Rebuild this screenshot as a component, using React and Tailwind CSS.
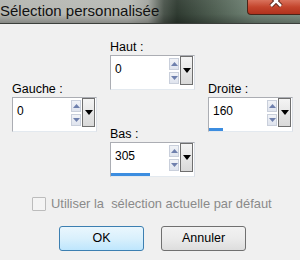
import React from "react";

function Spinner() {
  return (
    <div className="w-[10px] flex flex-col gap-[2px] pt-[2px]">
      {/* up */}
      <div className="h-[12px] border border-[#c9cfdb] bg-[linear-gradient(#f1f3f7,#dfe4ee)] flex items-center justify-center">
        <svg width="7" height="4" viewBox="0 0 7 4">
          <path d="M0 4 L3.5 0 L7 4 Z" fill="#6f80ad" />
        </svg>
      </div>
      {/* down */}
      <div className="h-[12px] border border-[#c9cfdb] bg-[linear-gradient(#f1f3f7,#dfe4ee)] flex items-center justify-center">
        <svg width="7" height="4" viewBox="0 0 7 4">
          <path d="M0 0 L7 0 L3.5 4 Z" fill="#6f80ad" />
        </svg>
      </div>
    </div>
  );
}

function NumField({ label, value, bar = 0 }) {
  return (
    <div className="flex flex-col">
      <div className="h-[15px] leading-[15px] text-[12.5px] text-black">{label}</div>
      <div className="w-[85px] h-[35px] border border-[#abadb3] border-r-[#dbdfe6] border-b-[#e3e9ef] bg-white flex flex-col">
        <div className="flex h-[29px]">
          <div className="flex-1 pl-[4px] pt-[6px] text-[12px] leading-[14px] text-black">{value}</div>
          <Spinner />
          <div className="w-[13px] ml-[1px] mr-[1px] border border-[#6f6f6f] bg-[linear-gradient(#f4f4f4,#d9d9d9)] flex justify-center pt-[11px]">
            <svg width="8" height="5" viewBox="0 0 8 5">
              <path d="M0 0 L8 0 L4 5 Z" fill="#000" />
            </svg>
          </div>
        </div>
        <div className="h-[4px] flex items-end">
          <div className="h-[3px] bg-[#3c8de0]" style={{ width: bar }} />
        </div>
      </div>
    </div>
  );
}

export default function App() {
  return (
    <div className="w-[300px] h-[260px] overflow-hidden bg-[#f0f0f0] font-['Liberation_Sans',Arial,sans-serif]">
      {/* Title bar */}
      <div className="relative h-[24px] border-b border-[#3b3f3b] bg-[linear-gradient(90deg,#b4b6b1_0px,#b9bbb6_128px,#a2a59f_148px,#4a544b_164px,#2f3b31_177px,#4f5f52_215px,#738678_255px,#7f9184_300px)]">
        <div className="absolute inset-0 bg-[linear-gradient(rgba(255,255,255,0.05),rgba(255,255,255,0)_60%,rgba(0,0,0,0.25))]" />
        <div className="relative pt-[2px] text-[15px] leading-[18px] text-[#111] whitespace-nowrap">
          Sélection personnalisée
        </div>
        {/* Close button */}
        <div className="absolute right-0 top-0 w-[53px] h-[15px] rounded-bl-[4px] border border-t-0 border-r-0 border-[#4a2418] bg-[linear-gradient(#d9725c,#c4452d_50%,#b0321d)] overflow-hidden flex justify-center">
          <svg width="16" height="16" viewBox="0 0 16 16" className="-mt-[7px] ml-[4px]">
            <path d="M3 3 L13 13 M13 3 L3 13" stroke="#5a2418" strokeWidth="4.5" />
            <path d="M3 3 L13 13 M13 3 L3 13" stroke="#fff" strokeWidth="2.5" />
          </svg>
        </div>
      </div>

      {/* Fields */}
      <div className="flex gap-[13px] pl-[12px]">
        <div className="pt-[58px]">
          <NumField label="Gauche :" value="0" />
        </div>
        <div className="pt-[16px] flex flex-col gap-[37px]">
          <NumField label="Haut :" value="0" />
          <NumField label="Bas :" value="305" bar={39} />
        </div>
        <div className="pt-[58px]">
          <NumField label="Droite :" value="160" bar={14} />
        </div>
      </div>

      {/* Checkbox */}
      <div className="flex items-center gap-[5px] pl-[32px] mt-[19px] h-[15px]">
        <div className="w-[14px] h-[14px] border border-[#bcbcbc] bg-[#f4f4f4] rounded-[1px]" />
        <div className="text-[12.9px] leading-[15px] text-[#8a8a8a] whitespace-pre">
          Utiliser la  sélection actuelle par défaut
        </div>
      </div>

      {/* Buttons */}
      <div className="flex gap-[17px] pl-[59px] mt-[15px]">
        <div className="w-[85px] h-[25px] rounded-[3px] border border-[#3c7fb1] bg-[linear-gradient(#eaf6fd,#d9f0fc_50%,#bee6fd)] flex items-center justify-center text-[12.5px] text-black">
          OK
        </div>
        <div className="w-[85px] h-[25px] rounded-[3px] border border-[#707070] bg-[linear-gradient(#f2f2f2,#ebebeb_50%,#dddddd)] flex items-center justify-center text-[12.5px] text-black">
          Annuler
        </div>
      </div>
    </div>
  );
}
